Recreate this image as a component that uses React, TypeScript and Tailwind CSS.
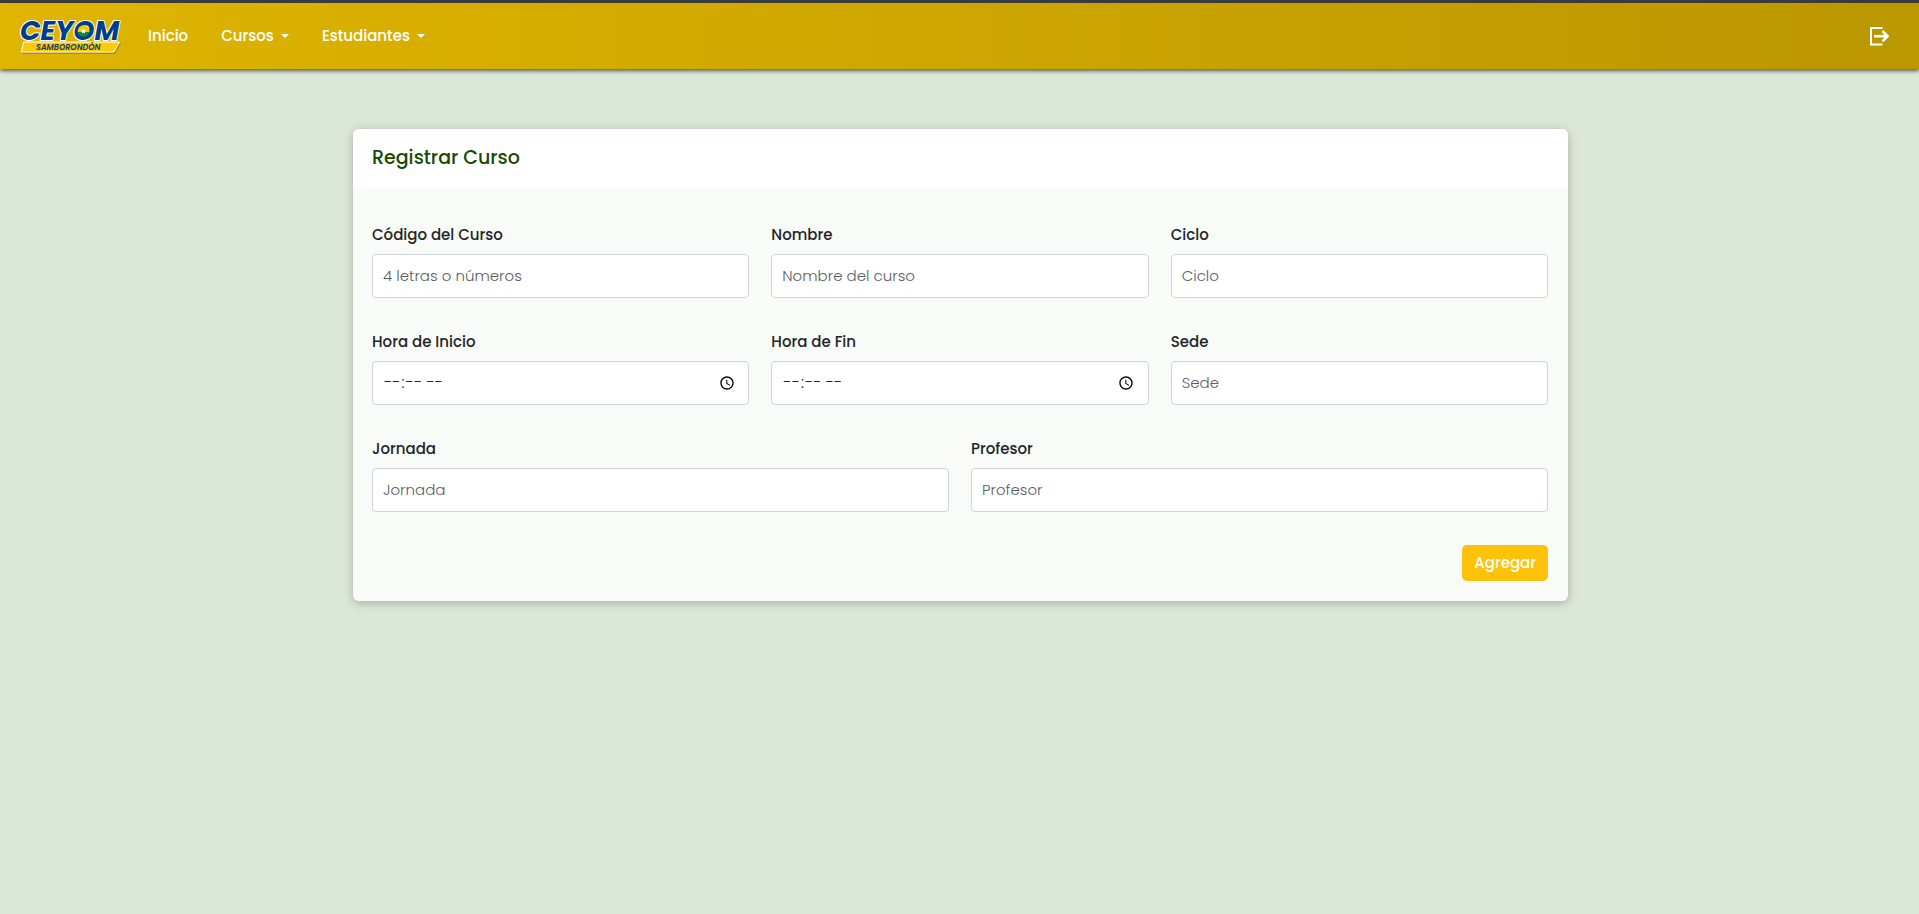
import React, { useId } from "react";

type FieldProps = {
  label: string;
  placeholder?: string;
  type?: "text" | "time";
};

function Field({ label, placeholder, type = "text" }: FieldProps) {
  const id = useId();
  const textStyle = type === "time" ? "text-base" : "pb-0.5 text-[15px]";
  return (
    <div className="flex min-w-0 flex-1 flex-col gap-[7px]">
      <label htmlFor={id} className="text-[15px] leading-6 font-medium text-[#212529]">
        {label}
      </label>
      <input
        id={id}
        type={type}
        placeholder={placeholder}
        className={`h-11 w-full rounded border border-[#ced4da] bg-white px-2.5 font-light text-[#212529] placeholder:text-[#5c6064] ${textStyle}`}
      />
    </div>
  );
}

function Logo() {
  return (
    <svg viewBox="0 0 102 38" className="h-[38px] w-[102px] overflow-visible" role="img" aria-label="CEYOM Samborondón">
      <defs>
        <linearGradient id="flag" x1="0" y1="0" x2="0" y2="1">
          <stop offset="0.55" stopColor="#f5c80a" />
          <stop offset="0.55" stopColor="#0b8a3c" />
        </linearGradient>
      </defs>
      <path d="M4 26.5H101L95 37H2Z" fill="#7a6400" opacity="0.45" />
      <path d="M3.5 25H99.5L94 35H1.5Z" fill="#fdc90a" stroke="#fff" strokeWidth="1" />
      <text
        x="0"
        y="23"
        fontFamily="Poppins, sans-serif"
        fontStyle="italic"
        fontWeight="700"
        fontSize="27"
        fill="#003f87"
        stroke="#fff"
        strokeWidth="2"
        paintOrder="stroke"
        strokeLinejoin="round"
      >
        CEYOM
      </text>
      <circle cx="63.5" cy="14" r="5.8" fill="url(#flag)" />
      <path d="M63.5 11.2L64.3 13.2H66.4L64.7 14.6L65.3 16.6L63.5 15.4L61.7 16.6L62.3 14.6L60.6 13.2H62.7Z" fill="#fff" />
      <text x="16" y="33" fontFamily="Poppins, sans-serif" fontStyle="italic" fontWeight="600" fontSize="8" fill="#123f5c">
        SAMBORONDÓN
      </text>
    </svg>
  );
}

function Caret() {
  return (
    <svg viewBox="0 0 8 4" className="h-1 w-2" fill="currentColor" aria-hidden="true">
      <path d="M0 0H8L4 4Z" />
    </svg>
  );
}

export default function App() {
  return (
    <div className="min-h-screen bg-[#dce8d7] font-[Poppins,Inter,sans-serif]">
      <header className="flex h-[69px] items-center border-t-3 border-[#3b3b3b] bg-linear-to-r from-[#dfb500] to-[#bb9700] pr-7 pl-5 shadow-[0_2px_4px_rgba(0,0,0,0.6)]">
        <a href="#" className="mr-[26px]">
          <Logo />
        </a>
        <nav className="flex items-center gap-[33px] text-[15px] leading-6 font-medium text-white">
          <a href="#">Inicio</a>
          <button type="button" className="flex items-center gap-[7px]">
            Cursos <Caret />
          </button>
          <button type="button" className="flex items-center gap-[7px]">
            Estudiantes <Caret />
          </button>
        </nav>
        <button type="button" aria-label="Salir" className="ml-auto text-white">
          <svg viewBox="0 0 22 20" className="h-5 w-[22px]" fill="none" stroke="currentColor" aria-hidden="true">
            <path d="M13.5 2H2V18.5H13.5" strokeWidth="2" />
            <path d="M5 10.2H18" strokeWidth="2.6" />
            <path d="M13.5 5L18.5 10.2L13.5 15.4" strokeWidth="2.6" />
          </svg>
        </button>
      </header>
      <main className="mx-auto max-w-[1217px] pt-[60px] pl-0.5">
        <form className="overflow-hidden rounded-md bg-[#f9fbf8] shadow-[0_2px_10px_rgba(0,0,0,0.25)]">
          <div className="bg-white py-[17px] pr-5 pl-[19px]">
            <h1 className="text-[19px] leading-6 font-medium text-[#164a05]">Registrar Curso</h1>
          </div>
          <div className="flex flex-col gap-8 pt-9 pr-5 pb-5 pl-[19px]">
            <div className="flex gap-[22px]">
              <Field label="Código del Curso" placeholder="4 letras o números" />
              <Field label="Nombre" placeholder="Nombre del curso" />
              <Field label="Ciclo" placeholder="Ciclo" />
            </div>
            <div className="flex gap-[22px]">
              <Field label="Hora de Inicio" type="time" />
              <Field label="Hora de Fin" type="time" />
              <Field label="Sede" placeholder="Sede" />
            </div>
            <div className="flex gap-[22px]">
              <Field label="Jornada" placeholder="Jornada" />
              <Field label="Profesor" placeholder="Profesor" />
            </div>
            <button type="submit" className="mt-px h-9 self-end rounded-[5px] bg-[#ffc20a] px-3 text-[15px] font-medium text-white">
              Agregar
            </button>
          </div>
        </form>
      </main>
    </div>
  );
}
